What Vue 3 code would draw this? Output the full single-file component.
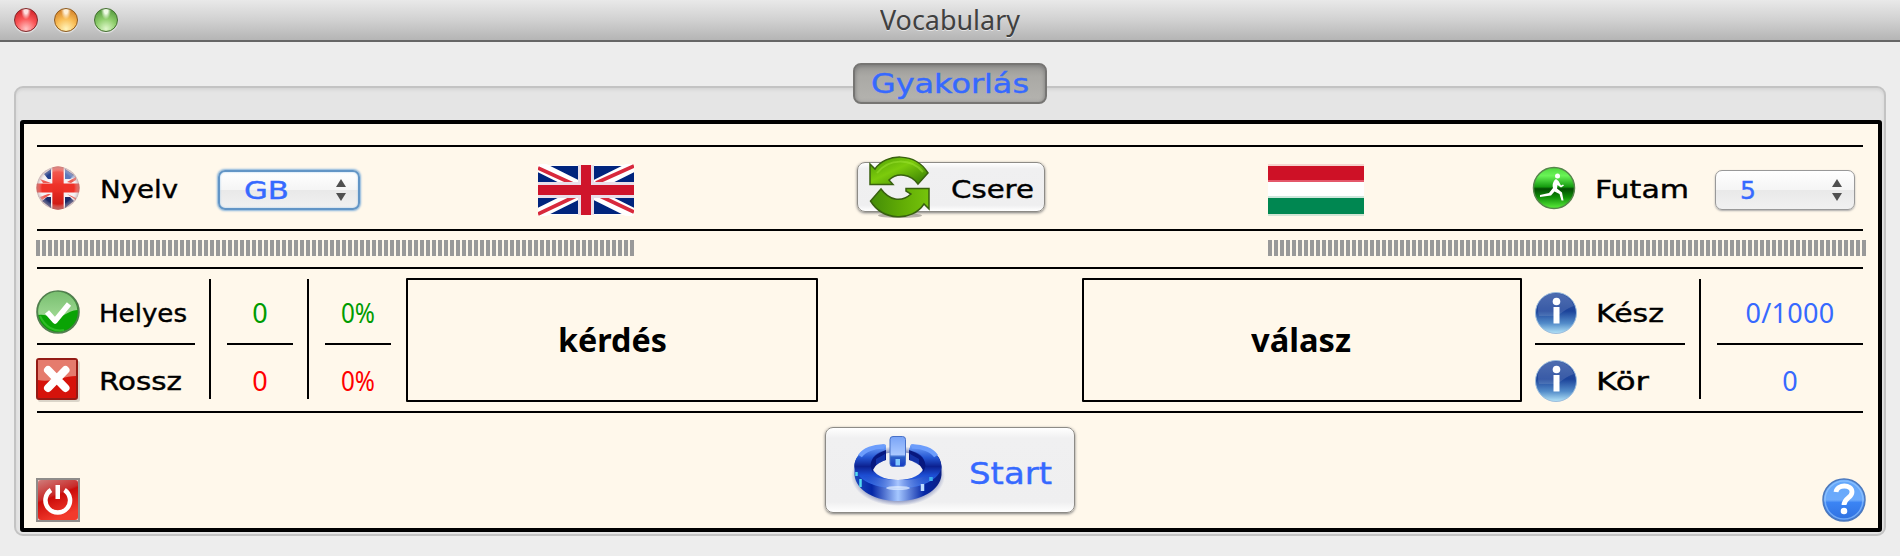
<script setup>
const lights = ['red', 'amber', 'green']

// Stretches a label's glyphs so that its advance width equals the given value.
const vFit = {
  mounted(el, { value }) {
    const natural = el.getBoundingClientRect().width
    el.style.transform = `scaleX(${value / natural})`
    el.style.marginRight = `${value - natural}px`
  },
}
</script>

<template>
  <div class="window">
    <header class="titlebar">
      <div class="lights">
        <span v-for="c in lights" :key="c" class="light" :class="c"></span>
      </div>
      <h1><span v-fit="140" class="label">Vocabulary</span></h1>
    </header>

    <main class="group">
      <div class="tab hand"><span v-fit="158" class="label">Gyakorlás</span></div>

      <section class="panel">
        <hr class="rule first" />

        <div class="settings">
          <div class="side left">
            <svg class="i44" viewBox="0 0 44 44">
              <defs>
                <clipPath id="round"><circle cx="22" cy="22" r="21.5" /></clipPath>
                <radialGradient id="ballShade" cx=".5" cy=".5" r=".5">
                  <stop offset=".75" stop-color="#fff" stop-opacity="0" />
                  <stop offset="1" stop-color="#a88" stop-opacity=".65" />
                </radialGradient>
                <linearGradient id="ballRed" x1="0" y1="0" x2="0" y2="1">
                  <stop offset="0" stop-color="#f4695f" />
                  <stop offset=".45" stop-color="#ee3128" />
                  <stop offset="1" stop-color="#c6150f" />
                </linearGradient>
              </defs>
              <g clip-path="url(#round)">
                <rect width="44" height="44" fill="#f6f2f4" />
                <path d="M8 8 15 3V13H12zM29 3 38 9 34 13H29z" fill="#24408c" />
                <path d="M29 3 40 11 34 13H29z" fill="#7c9bd6" opacity=".65" />
                <path d="M6 35 11 31H15V42zM29 31H34L38 35 29 42z" fill="#1c2a66" />
                <path d="M4 13 15 17H7zM31 16 40 11V14L35 17zM4 31 12 28H15L6 34zM31 28 40 32V34z" fill="#ee5b52" />
                <rect x="16.500" width="11" height="44" fill="url(#ballRed)" />
                <rect y="17.500" width="44" height="9" fill="#ee3128" />
                <rect x="16.500" width="11" height="44" fill="url(#ballRed)" opacity=".6" />
              </g>
              <circle cx="22" cy="22" r="21.5" fill="url(#ballShade)" />
            </svg>
            <span v-fit="78" class="label hand name">Nyelv</span>
            <div class="select focused">
              <span v-fit="45" class="label hand">GB</span>
              <svg class="arrows" viewBox="0 0 10 22"><path d="M0 8 5 0 10 8zM0 14H10L5 22z" /></svg>
            </div>
          </div>
          <svg class="flag gb" viewBox="0 0 96 52">
            <rect y="1" width="96" height="50" fill="#fff" opacity=".75" />
            <rect y="2" width="96" height="48" fill="#00247d" />
            <path d="M0 2 96 50M96 2 0 50" stroke="#fff" stroke-width="11" />
            <path d="M0 4 35 20M96 2 58 19M0 50 38 32M96 48 62 32" stroke="#d8293c" stroke-width="3.600" />
            <path d="M48 1V51M0 26H96" stroke="#e9dfe9" stroke-width="16" />
            <path d="M48 1V51" stroke="#cf142b" stroke-width="10" />
            <path d="M0 26H96" stroke="#cf142b" stroke-width="10" />
          </svg>
          <button class="btn swap">
            <svg viewBox="0 0 62 62">
              <defs>
                <linearGradient id="leaf" x1="0" y1="0" x2="1" y2="1">
                  <stop offset="0" stop-color="#4b9a05" />
                  <stop offset=".45" stop-color="#7ccb0c" />
                  <stop offset="1" stop-color="#2f7401" />
                </linearGradient>
                <linearGradient id="leaf2" x1="0" y1="0" x2="1" y2="0">
                  <stop offset="0" stop-color="#438c08" />
                  <stop offset=".55" stop-color="#62ad05" />
                  <stop offset="1" stop-color="#76c40c" />
                </linearGradient>
              </defs>
              <ellipse cx="31" cy="59.500" rx="22" ry="2.500" fill="#000" opacity=".28" />
              <path d="M1 8 6 13C17-3 46-4 59 17L49 28C42 18 28 16 20 24L24 28.500H1z" fill="url(#leaf)" stroke="#38600f" stroke-width="1.500" />
              <path d="M8 17C20 2 42 2 54 16" fill="none" stroke="#a5e83a" stroke-width="2" opacity=".45" />
              <path d="M60 53 55 48C43 66 14 65 1.500 45L12 33C20 44 32 47 42 38L37 35V32.500H60z" fill="url(#leaf2)" stroke="#38600f" stroke-width="1.500" />
            </svg>
            <span v-fit="83" class="label hand">Csere</span>
          </button>
          <svg class="flag hu" viewBox="0 0 96 52">
            <rect width="96" height="52" fill="#fff" />
            <rect width="96" height="2" fill="#f6d4cf" />
            <rect y="2" width="96" height="15" fill="#ce1126" />
            <rect y="16" width="96" height="2" fill="#e4576a" />
            <rect y="32" width="96" height="2" fill="#cde7dc" />
            <rect y="34" width="96" height="16" fill="#008751" />
            <rect y="50" width="96" height="2" fill="#d2e5d4" />
          </svg>
          <div class="side right">
            <svg class="run" viewBox="0 0 44 44">
              <defs>
                <linearGradient id="runBall" x1="0" y1="0" x2="0" y2="1">
                  <stop offset="0" stop-color="#4cd63c" />
                  <stop offset=".2" stop-color="#6af457" />
                  <stop offset=".47" stop-color="#159c10" />
                  <stop offset=".52" stop-color="#034c02" />
                  <stop offset=".72" stop-color="#0e8d07" />
                  <stop offset="1" stop-color="#5cf03c" />
                </linearGradient>
              </defs>
              <circle cx="22" cy="22" r="20.500" fill="url(#runBall)" stroke="#55854a" stroke-width="1.500" />
              <circle cx="25.500" cy="10" r="2.500" fill="#fff" />
              <path d="M24 13C21 15 20 19 21 22L17 27 8 29V31L19 29.500 22.500 25.500 27.500 28 29.500 34.500H31.500L30 26.500 25 22.500 25.500 19 29 21.500 32 19.500 31 18.500 29 19.500 26.500 15z" fill="#fff" />
            </svg>
            <span v-fit="94" class="label hand name">Futam</span>
            <div class="select">
              <span class="label hand five">5</span>
              <svg class="arrows" viewBox="0 0 10 22"><path d="M0 8 5 0 10 8zM0 14H10L5 22z" /></svg>
            </div>
          </div>
        </div>

        <hr class="rule" />
        <div class="ticks"><i></i><i></i></div>
        <hr class="rule" />

        <div class="stats">
          <div class="cells names">
            <div class="cell">
              <svg class="i44" viewBox="0 0 44 44">
                <defs>
                  <linearGradient id="okTop" x1="0" y1="0" x2="0" y2="1">
                    <stop offset="0" stop-color="#79bf70" />
                    <stop offset="1" stop-color="#9ed893" />
                  </linearGradient>
                </defs>
                <circle cx="22" cy="22" r="20.800" fill="#0aa305" stroke="#517f4e" stroke-width="2" />
                <path d="M2.500 25A19.600 19.600 0 1 1 41.300 20C30 21 27 29 17 27 11 26 8 24 2.500 25z" fill="url(#okTop)" />
                <path d="M4 26C9 37 18 42 28 40" fill="none" stroke="#53d34a" stroke-width="2" opacity=".5" />
                <path d="M11 22 19 31 33 14" fill="none" stroke="#fff" stroke-width="5.500" stroke-linejoin="round" />
              </svg>
              <span v-fit="88" class="label hand name">Helyes</span>
            </div>
            <hr />
            <div class="cell second">
              <svg class="i44" viewBox="0 0 44 44">
                <rect x="2" y="3" width="42" height="41" rx="2" fill="#000" opacity=".14" />
                <rect x="1" y="1" width="40" height="40" rx="2" fill="#d6130b" stroke="#941b15" stroke-width="2" />
                <path d="M2 2H40V18C28 18 15 25 2 22z" fill="#e57b6d" />
                <path d="M12 12 29.500 30M29.500 12 12 30" stroke="#fff" stroke-width="8" stroke-linecap="round" />
              </svg>
              <span v-fit="83" class="label hand name">Rossz</span>
            </div>
          </div>
          <div class="vline"></div>
          <div class="cells value">
            <div class="cell ok">0</div>
            <hr />
            <div class="cell second bad">0</div>
          </div>
          <div class="vline"></div>
          <div class="cells value">
            <div class="cell ok"><span v-fit="34" class="label">0%</span></div>
            <hr />
            <div class="cell second bad"><span v-fit="34" class="label">0%</span></div>
          </div>
          <div class="word question"><span v-fit="109" class="label">kérdés</span></div>
          <div class="word answer"><span v-fit="100" class="label">válasz</span></div>
          <div class="cells info">
            <div v-for="(item, n) in [{ t: 'Kész', w: 68 }, { t: 'Kör', w: 53 }]" :key="item.t" class="cell" :class="{ second: n }">
              <svg class="i42" viewBox="0 0 42 42">
                <defs>
                  <linearGradient :id="'info' + n" x1="0" y1="0" x2="0" y2="1">
                    <stop offset="0" stop-color="#3558a5" />
                    <stop offset=".45" stop-color="#1c439a" />
                    <stop offset=".75" stop-color="#528bc9" />
                    <stop offset="1" stop-color="#b4e4f8" />
                  </linearGradient>
                </defs>
                <circle cx="21" cy="21" r="20.500" :fill="`url(#info${n})`" stroke="#9cbcdc" />
                <path d="M4 10A20 20 0 0 1 39 14C31 16 27 22 20 24L4 24A24 24 0 0 1 4 10z" fill="#fff" opacity=".13" />
                <circle cx="21.500" cy="9.500" r="3.800" fill="#fff" />
                <rect x="18.500" y="15" width="6" height="16.500" fill="#fff" />
              </svg>
              <span v-fit="item.w" class="label hand name">{{ item.t }}</span>
            </div>
            <hr />
          </div>
          <div class="vline"></div>
          <div class="cells totals">
            <div class="cell"><span class="label total">0/1000</span></div>
            <hr />
            <div class="cell second">0</div>
          </div>
        </div>

        <hr class="rule" />

        <footer class="bottom">
          <svg class="i44" viewBox="0 0 44 44">
            <defs>
              <linearGradient id="off" x1="0" y1="0" x2=".4" y2="1">
                <stop offset="0" stop-color="#cf7d7b" />
                <stop offset=".45" stop-color="#c92a29" />
                <stop offset=".5" stop-color="#cb0c0a" />
                <stop offset="1" stop-color="#f23a2c" />
              </linearGradient>
            </defs>
            <rect x="1" y="1" width="42" height="42" fill="#f3cccc" stroke="#8f8c8a" stroke-width="2" />
            <rect x="2" y="2" width="40" height="40" rx="3" fill="url(#off)" />
            <path d="M15 12A12.300 12.300 0 1 0 28.500 12" fill="none" stroke="#fff" stroke-width="4.500" />
            <rect x="19.500" y="7" width="4.500" height="14" fill="#fff" />
          </svg>
          <button class="btn start">
            <svg viewBox="0 0 96 76">
              <defs>
                <linearGradient id="ring" x1="0" y1="0" x2="0" y2="1">
                  <stop offset="0" stop-color="#77a8ff" />
                  <stop offset=".3" stop-color="#2456d2" />
                  <stop offset=".5" stop-color="#0c2190" />
                  <stop offset=".7" stop-color="#1c4dd3" />
                  <stop offset="1" stop-color="#3d77f0" />
                </linearGradient>
                <linearGradient id="rim" x1="0" y1="0" x2="1" y2="0">
                  <stop offset="0" stop-color="#1c49bd" />
                  <stop offset=".2" stop-color="#0426a6" />
                  <stop offset=".5" stop-color="#a5c7ff" />
                  <stop offset=".8" stop-color="#0426a6" />
                  <stop offset="1" stop-color="#0b1f83" />
                </linearGradient>
                <linearGradient id="face" x1="0" y1="0" x2="1" y2="0">
                  <stop offset="0" stop-color="#0a2da5" stop-opacity="0" />
                  <stop offset=".5" stop-color="#a8c6ff" />
                  <stop offset="1" stop-color="#0a2da5" stop-opacity="0" />
                </linearGradient>
                <linearGradient id="stem" x1="0" y1="0" x2="0" y2="1">
                  <stop offset="0" stop-color="#7aa4f6" />
                  <stop offset=".6" stop-color="#a9c8ff" />
                  <stop offset=".68" stop-color="#2d62c9" />
                  <stop offset="1" stop-color="#1639c3" />
                </linearGradient>
                <radialGradient id="glow">
                  <stop offset=".78" stop-color="#1b2f88" stop-opacity=".55" />
                  <stop offset="1" stop-color="#1b2f88" stop-opacity="0" />
                </radialGradient>
              </defs>
              <ellipse cx="47" cy="44" rx="47" ry="30" fill="url(#glow)" />
              <ellipse cx="47" cy="36" rx="29" ry="16" fill="#efeff2" />
              <path d="M34 12.500C14 15 3 23 3.500 36V43C5 59 25 69 47 69S89 59 90.500 43V36C91 23 80 15 60 12.500L58 18V28C68 30 73 34 73.500 38C71 45 58 48 47 48S22 45 20 38C21 33 27 30 35 28V15z" fill="url(#rim)" />
              <path d="M34 12.500C14 15 3 23 3.500 35C5 48 25 56.500 47 56.500S89 48 90.500 35C90 23 80 15 60 12.500L58 18C68 20 74 25 74 33C72 43 60 48 47 48S22 43 20 33C20 25 26 20 35 18V13z" fill="url(#ring)" />
              <path d="M11 45C20 41 22 47 47 48S74 41 83 45C75 53 60 56.500 47 56.500S19 53 11 45z" fill="url(#face)" />
              <path d="M19.500 34C20 25 27 21 35 18V28C28 30 23 34 21.500 40zM74.500 34C74 25 67 21 58 18V28C66 30 71 34 72.500 40z" fill="#07187f" />
              <path d="M25 27 34 22V28L25 33zM68 27 59 22V28L68 33z" fill="#1c46c4" opacity=".6" />
              <path d="M9 24C13 18 23 14 33 14.500M61 14.500C71 14 81 18 85 24" fill="none" stroke="#6c9dfc" stroke-width="4.500" />
              <path d="M5.500 40V44M9.500 47V55" stroke="#54dcf0" stroke-width="2.500" />
              <path d="M80 45V49" stroke="#38aef0" stroke-width="3.500" />
              <path d="M71.500 52V59" stroke="#bddcff" stroke-width="3.500" />
              <rect x="39" y="4.500" width="15.500" height="30" rx="3" fill="url(#stem)" stroke="#4770c7" />
              <path d="M44.500 27H49V33.500H44.500z" fill="#80c8ff" />
              <ellipse cx="47" cy="56" rx="12" ry="2" fill="#e2efff" opacity=".7" />
            </svg>
            <span v-fit="83" class="label hand">Start</span>
          </button>
          <svg class="i44" viewBox="0 0 44 44">
            <defs>
              <linearGradient id="help" x1="0" y1="0" x2="0" y2="1">
                <stop offset="0" stop-color="#62a7fb" />
                <stop offset=".5" stop-color="#6caafb" />
                <stop offset=".56" stop-color="#3b84f4" />
                <stop offset="1" stop-color="#2f70df" />
              </linearGradient>
            </defs>
            <circle cx="22" cy="22" r="21" fill="url(#help)" stroke="#4c79bd" stroke-width="1.500" />
            <circle cx="22" cy="22" r="19" fill="none" stroke="#9bccff" stroke-width="1.500" opacity=".6" />
            <path d="M14 14C15 6 30 6 30 14 30 20 22 20 22 27" fill="none" stroke="#fff" stroke-width="4.800" />
            <circle cx="22" cy="33" r="3.300" fill="#fff" />
          </svg>
        </footer>
      </section>
    </main>
  </div>
</template>

<style>
html,
body {
  margin: 0;
  background: #ededed;
}
</style>

<style scoped>
.window {
  width: 1900px;
  height: 556px;
  overflow: hidden;
  background: #ededed;
  font-family: "Noto Sans", "Open Sans", sans-serif;
}
svg {
  display: block;
  flex: none;
}
hr {
  height: 2px;
  margin: 0;
  border: 0;
  background: #000;
}
.label {
  display: inline-block;
  flex: none;
  white-space: nowrap;
  transform-origin: left;
}
.hand {
  font-family: "Chalkduster", "DejaVu Sans", sans-serif;
  font-size: 25px;
  -webkit-text-stroke: 0.4px currentColor;
}
.titlebar {
  position: relative;
  box-sizing: border-box;
  height: 42px;
  border-bottom: 2px solid #666;
  background: linear-gradient(#e9e9e9, #d1d1d1 50%, #b5b5b5);
}
.titlebar h1 {
  margin: 0;
  color: #404040;
  font: 400 27px/40px "Noto Sans", sans-serif;
  text-align: center;
  text-shadow: 0 1px 0 #e5e5e5;
}
.lights {
  position: absolute;
  left: 14px;
  top: 8px;
  display: flex;
  gap: 16px;
}
.light {
  box-sizing: border-box;
  width: 24px;
  height: 24px;
  border-radius: 50%;
  box-shadow: 0 1px 1px #eee;
}
.red {
  border: 1.5px solid #82282a;
  background: radial-gradient(ellipse at 50% 5%, #ffe0e0 0 12%, transparent 32%), radial-gradient(circle at 50% 90%, #ffc5c5 0, #fb5758 45%, #d62b30 80%);
}
.amber {
  border: 1.5px solid #8e5a1d;
  background: radial-gradient(ellipse at 50% 5%, #fff0d6 0 12%, transparent 32%), radial-gradient(circle at 50% 90%, #fff5bd 0, #f9bd55 45%, #d98b30 80%);
}
.green {
  border: 1.5px solid #426f2f;
  background: radial-gradient(ellipse at 50% 5%, #effbe5 0 12%, transparent 32%), radial-gradient(circle at 50% 90%, #e0f8cc 0, #8fce6c 45%, #5fa346 80%);
}
.group {
  position: relative;
  box-sizing: border-box;
  width: 1872px;
  height: 450px;
  margin: 44px 0 0 14px;
  padding: 32px 2px 0 4px;
  border: 2px solid #c3c3c3;
  border-radius: 9px;
  background: #e5e5e5;
  box-shadow: inset 0 2px 3px #d5d5d5;
}
.tab {
  position: absolute;
  top: -25px;
  left: 837px;
  box-sizing: border-box;
  width: 194px;
  height: 41px;
  border: 2px solid #767573;
  border-radius: 8px;
  background: linear-gradient(#999895, #aaa9a5 30%, #b4b3af);
  box-shadow: inset 0 1px 4px #777;
  color: #3669ff;
  font-size: 26px;
  line-height: 38px;
  text-align: center;
}
.panel {
  box-sizing: border-box;
  width: 1862px;
  height: 412px;
  padding: 0 12px;
  border: 4px solid #000;
  border-radius: 3px;
  background: #fff8eb;
}
.rule {
  margin: 0 3px 0 1px;
}
.first {
  margin-top: 21px;
}
.settings {
  display: flex;
  align-items: center;
  height: 82px;
}
.i44 {
  width: 44px;
  height: 44px;
}
.i42 {
  width: 42px;
  height: 42px;
}
.side {
  display: flex;
  align-items: center;
}
.left {
  width: 502px;
}
.name {
  padding-top: 3px;
}
.left .name {
  margin-left: 20px;
}
.left .select {
  margin-left: 40px;
}
.select {
  box-sizing: border-box;
  display: flex;
  align-items: center;
  justify-content: space-between;
  width: 140px;
  height: 40px;
  margin-top: 4px;
  padding: 0 12px 0 24px;
  border: 1.5px solid #999;
  border-radius: 7px;
  background: linear-gradient(#fff, #f5f5f5 49%, #e9e9e9 51%, #f1f1f1);
  box-shadow: 0 1px 2px #aaa;
  color: #3669ff;
}
.focused {
  width: 142px;
  border: 2px solid #6295c6;
  box-shadow: 0 0 2px 1px #87b4dc, inset 0 0 2px #9ac5ea;
}
.arrows {
  width: 10px;
  height: 22px;
  fill: #505050;
}
.flag {
  width: 96px;
  height: 52px;
  margin-top: 4px;
}
.btn {
  box-sizing: border-box;
  display: flex;
  align-items: center;
  padding: 0;
  border: 1.5px solid #8d8b86;
  border-radius: 8px;
  background: linear-gradient(#fff, #f0f0f1 12%, #efeff0 88%, #fff);
  box-shadow: 0 1px 3px #777;
}
.swap {
  width: 188px;
  height: 50px;
  margin: 0 223px 3px 223px;
  padding-left: 11px;
}
.swap svg {
  width: 62px;
  height: 62px;
}
.swap .label {
  margin: 5px 0 0 20px;
}
.right {
  margin-left: 168px;
}
.run {
  width: 44px;
  height: 44px;
}
.right .name {
  margin-left: 19px;
}
.right .select {
  margin-left: 26px;
}
.five {
  width: 16px;
}
.ticks {
  display: flex;
  justify-content: space-between;
  height: 16px;
  padding: 9px 0 11px;
}
.ticks i {
  width: 598px;
  background: repeating-linear-gradient(90deg, #999 0 4px, transparent 4px 6px);
}
.stats {
  display: flex;
  align-items: flex-start;
  height: 142px;
}
.cells {
  display: grid;
  grid-template-rows: 74px 2px 66px;
}
.cell {
  grid-row: 1;
  display: flex;
  align-items: center;
  padding-top: 12px;
}
.cells hr {
  grid-row: 2;
}
.second {
  grid-row: 3;
  padding-top: 4px;
}
.names {
  width: 160px;
}
.names hr {
  width: 158px;
  margin-left: 1px;
}
.names .name {
  margin-left: 19px;
}
.vline {
  width: 2px;
  height: 120px;
  margin-top: 10px;
  background: #000;
}
.names + .vline {
  margin-left: 13px;
}
.value {
  width: 66px;
  margin: 0 14px 0 16px;
}
.value .cell,
.totals .cell {
  justify-content: center;
  font-size: 27px;
}
.ok {
  color: #009c00;
}
.bad {
  color: #f00;
}
.word {
  box-sizing: border-box;
  display: flex;
  align-items: center;
  justify-content: center;
  height: 124px;
  margin-top: 9px;
  border: 2px solid #000;
  border-radius: 1px;
  font: 700 32px/40px "Noto Sans", sans-serif;
}
.question {
  width: 412px;
  margin-left: 1px;
}
.answer {
  width: 440px;
  margin-left: 264px;
}
.answer .label {
  margin-left: -2px;
}
.info {
  width: 150px;
  margin: 0 14px 0 13px;
}
.info .cell {
  padding-top: 14px;
}
.info .second {
  padding-top: 6px;
}
.info .name {
  margin-left: 19px;
  padding-top: 0;
}
.totals {
  width: 146px;
  margin-left: 16px;
  color: #3669ff;
}
.total {
  letter-spacing: 0.3px;
}
.bottom {
  display: flex;
  align-items: flex-end;
  justify-content: space-between;
  height: 109px;
}
.start {
  width: 250px;
  height: 86px;
  margin: 0 2px 9px 0;
  padding-left: 25px;
  color: #3669ff;
}
.start svg {
  width: 96px;
  height: 76px;
}
.start .label {
  margin: 6px 0 0 22px;
  font-size: 31px;
}
</style>
